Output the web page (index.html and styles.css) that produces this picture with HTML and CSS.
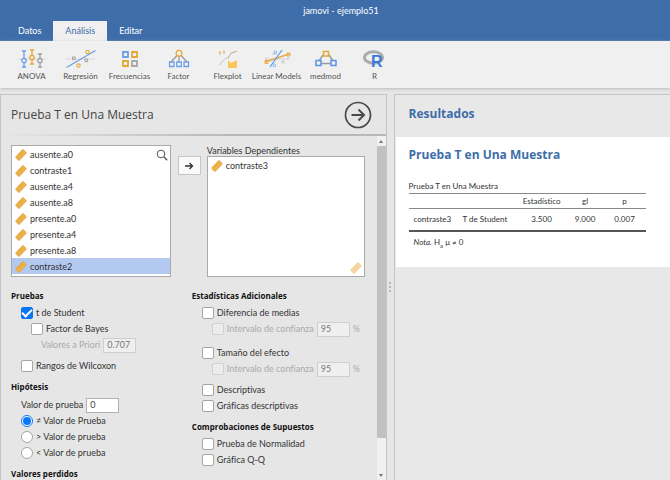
FILE: index.html
```
<!DOCTYPE html>
<html lang="es">
<head>
<meta charset="utf-8">
<title>jamovi - ejemplo51</title>
<link rel="stylesheet" href="styles.css">
</head>
<body>
<svg class="defs" aria-hidden="true">
  <symbol id="ruler" viewBox="0 0 12 12">
    <path d="M1 7.6 7.4.8q.6-.6 1.200 0L11 3.200q.6.6 0 1.200L4.500 11.200q-.6.6-1.200 0L1 8.800q-.6-.6 0-1.200z" fill="#eeb14c" stroke="#dc9a33" stroke-width=".6"/>
    <path d="M3.200 5.700l1.200 1.200M4.800 4.100l1.200 1.200M6.400 2.500l1.200 1.200" stroke="#d08f2c" stroke-width=".6"/>
  </symbol>
</svg>

<header class="titlebar">
  <div class="title">jamovi - ejemplo51</div>
  <nav class="tabs">
    <button class="tab" type="button">Datos</button>
    <button class="tab active" type="button">Análisis</button>
    <button class="tab" type="button">Editar</button>
  </nav>
</header>

<div class="ribbon">
  <button class="tool" type="button">
    <svg viewBox="0 0 30 20" fill="none"><path d="M1 10h28" stroke="#c8c8c8" stroke-dasharray="1 1"/><g stroke-width="1.300"><path d="M5 2h4M7 2v7M7 14v4M5 18h4" stroke="#6b9fe9"/><circle cx="7" cy="11.500" r="2.200" stroke="#6b9fe9"/><path d="M13 1h4M15 1v5M15 11v4M13 15h4" stroke="#e4a836"/><circle cx="15" cy="8.500" r="2.200" stroke="#e4a836"/><path d="M21 5h4M23 5v4M23 14v4M21 18h4" stroke="#a0a0a0"/><circle cx="23" cy="11.500" r="2.200" stroke="#a0a0a0"/></g></svg>
    <span>ANOVA</span>
  </button>
  <button class="tool" type="button">
    <svg viewBox="0 0 30 20" fill="none"><path d="M0 10h30" stroke="#c8c8c8" stroke-dasharray="1 1"/><path d="M.5 18.500 29.500 1.500" stroke="#6b9fe9" stroke-width="1.300"/><path d="M6.500 8h2.600v2.600H6.500zM19 10h2.600v2.600H19z" stroke="#a0a0a0"/><path d="M20 1.500h3v3h-3zM11 15h3v3h-3z" stroke="#e4a836"/></svg>
    <span>Regresión</span>
  </button>
  <button class="tool" type="button">
    <svg viewBox="0 0 30 20" fill="none" stroke-width="1.800"><path d="M8 3h5v5H8z" stroke="#6b9fe9"/><path d="M17 3h5v5h-5zM8 12h5v5H8z" stroke="#e4a836"/><path d="M17 12h5v5h-5z" stroke="#a8a8a8"/></svg>
    <span>Frecuencias</span>
  </button>
  <button class="tool" type="button">
    <svg viewBox="0 0 30 20" fill="none" stroke-width="1.300"><path d="M13 6.500 7 13M15 7v6M17 6.500 23 13" stroke="#9a9a9a"/><circle cx="15" cy="4.300" r="2.900" stroke="#e4a836"/><path d="M5.500 13h4.500v4.500H5.500zM12.800 13h4.500v4.500h-4.500zM20 13h4.500v4.500H20z" stroke="#6b9fe9"/></svg>
    <span>Factor</span>
  </button>
  <button class="tool" type="button">
    <svg viewBox="0 0 30 20" fill="none"><path d="M7 2v4M6 3.500h2M11 1v4M10 3.500h2M15 10q2-7 9-7.500" stroke="#e3b871"/><path d="M6 16 14 8M15 9l3-5 6-2" stroke="#b8b8b8" stroke-width=".8"/><path d="M15 11l3 3 2-1 4-2v8h-9z" fill="#fac75d"/></svg>
    <span>Flexplot</span>
  </button>
  <button class="tool" type="button">
    <svg viewBox="0 0 30 20" fill="none"><path d="M3 10h24M10 5h5M4 8v4M26 8v3" stroke="#c8c8c8" stroke-width=".8"/><path d="M3 13 27 5" stroke="#e9aa48" stroke-width="1.600"/><path d="M8 18 20 1" stroke="#5e9bea" stroke-width="1.300"/><path d="M3 11.500h3v3H3zM25 4h3v3h-3z" stroke="#e9aa48"/><path d="M12 2h2.500v2.500H12zM11 15h2.500v2.500H11z" stroke="#7fb0ee" stroke-width=".8"/><circle cx="21" cy="13" r="1.300" stroke="#c4c4c4" stroke-width=".8"/></svg>
    <span>Linear Models</span>
  </button>
  <button class="tool" type="button">
    <svg viewBox="0 0 30 20" fill="none" stroke-width="1.500"><path d="M12 6 8 12M18 6l4 6M10 14.500h10" stroke="#9a9a9a"/><path d="M12.500 2.500h5v4.500h-5z" stroke="#e4a836"/><path d="M5 11.500h5v5H5zM20 11.500h5v5h-5z" stroke="#5b93ea"/></svg>
    <span>medmod</span>
  </button>
  <button class="tool" type="button">
    <svg viewBox="0 0 30 20"><ellipse cx="13.500" cy="8.500" rx="9" ry="5.800" fill="none" stroke="#a9abb0" stroke-width="3"/><text x="11" y="18" class="r-mark">R</text></svg>
    <span>R</span>
  </button>
</div>

<main class="workspace">
  <section class="options">
    <div class="options-head">
      <h1>Prueba T en Una Muestra</h1>
      <button class="run" type="button" aria-label="Ocultar opciones">
        <svg viewBox="0 0 28 28" fill="none" stroke="#4a4a4a"><circle cx="14" cy="14" r="12.500" stroke-width="1.700"/><path d="M7.500 14h12M14.500 8.500 20 14l-5.500 5.500" stroke-width="2"/></svg>
      </button>
    </div>
    <div class="options-body">
      <div class="scroll">
        <div class="supplier">
          <ul class="vars">
            <li><svg><use href="#ruler"/></svg>ausente.a0</li>
            <li><svg><use href="#ruler"/></svg>contraste1</li>
            <li><svg><use href="#ruler"/></svg>ausente.a4</li>
            <li><svg><use href="#ruler"/></svg>ausente.a8</li>
            <li><svg><use href="#ruler"/></svg>presente.a0</li>
            <li><svg><use href="#ruler"/></svg>presente.a4</li>
            <li><svg><use href="#ruler"/></svg>presente.a8</li>
            <li class="selected"><svg><use href="#ruler"/></svg>contraste2</li>
            <svg class="search" viewBox="0 0 12 12" fill="none" stroke="#555"><circle cx="5" cy="5" r="3.800"/><path d="m8 8 3.200 3.200" stroke-width="1.300"/></svg>
          </ul>
          <button class="move" type="button" aria-label="Mover variable">
            <svg viewBox="0 0 10 10" fill="none" stroke="#333" stroke-width="1.400"><path d="M1 5h7.500M5.500 2l3 3-3 3"/></svg>
          </button>
          <div class="target">
            <div class="target-label">Variables Dependientes</div>
            <ul class="vars">
              <li><svg><use href="#ruler"/></svg>contraste3</li>
              <svg class="hint"><use href="#ruler"/></svg>
            </ul>
          </div>
        </div>

        <div class="columns">
          <div class="column">
            <h2>Pruebas</h2>
            <label class="row"><input type="checkbox" checked>t de Student</label>
            <label class="row sub"><input type="checkbox">Factor de Bayes</label>
            <label class="row sub2 off">Valores a Priori<input class="num" type="text" value="0.707" disabled></label>
            <label class="row spaced"><input type="checkbox">Rangos de Wilcoxon</label>
            <h2>Hipótesis</h2>
            <label class="row field">Valor de prueba<input class="num" type="text" value="0"></label>
            <label class="row"><input type="radio" name="hyp" checked>≠ Valor de Prueba</label>
            <label class="row"><input type="radio" name="hyp">&gt; Valor de prueba</label>
            <label class="row"><input type="radio" name="hyp">&lt; Valor de prueba</label>
            <h2>Valores perdidos</h2>
          </div>
          <div class="column">
            <h2>Estadísticas Adicionales</h2>
            <label class="row"><input type="checkbox">Diferencia de medias</label>
            <div class="row sub off"><input id="ci1" type="checkbox" disabled><label for="ci1">Intervalo de confianza</label><input class="num" type="text" value="95" aria-label="Porcentaje" disabled><span>%</span></div>
            <label class="row apart"><input type="checkbox">Tamaño del efecto</label>
            <div class="row sub off"><input id="ci2" type="checkbox" disabled><label for="ci2">Intervalo de confianza</label><input class="num" type="text" value="95" aria-label="Porcentaje" disabled><span>%</span></div>
            <label class="row spaced"><input type="checkbox">Descriptivas</label>
            <label class="row"><input type="checkbox">Gráficas descriptivas</label>
            <h2>Comprobaciones de Supuestos</h2>
            <label class="row"><input type="checkbox">Prueba de Normalidad</label>
            <label class="row"><input type="checkbox">Gráfica Q-Q</label>
          </div>
        </div>
      </div>
      <div class="scrollbar">
        <div class="arrow up"></div>
        <div class="thumb"></div>
        <div class="track"></div>
        <div class="arrow down"></div>
      </div>
    </div>
  </section>

  <div class="splitter"><i></i><i></i><i></i></div>

  <section class="results">
    <h2 class="results-title">Resultados</h2>
    <article class="result">
      <h2>Prueba T en Una Muestra</h2>
      <table>
        <caption>Prueba T en Una Muestra</caption>
        <colgroup><col class="wide"><col class="wide"><col class="mid"><col class="narrow"><col></colgroup>
        <thead><tr><th></th><th></th><th>Estadístico</th><th>gl</th><th>p</th></tr></thead>
        <tbody><tr><td>contraste3</td><td>T de Student</td><td>3.500</td><td>9.000</td><td>0.007</td></tr></tbody>
        <tfoot><tr><td colspan="5"><em>Nota.</em> H<sub>a</sub> μ ≠ 0</td></tr></tfoot>
      </table>
    </article>
  </section>
</main>
</body>
</html>
```

FILE: styles.css
```
* { box-sizing: border-box; }

body {
  margin: 0;
  height: 100vh;
  display: flex;
  flex-direction: column;
  overflow: hidden;
  background: #e6e6e6;
  color: #333;
  font: 9px/16px Lato, "Open Sans", sans-serif;
  font-variant-ligatures: none;
}

h1, h2, ul { margin: 0; padding: 0; }
button, input { font: inherit; color: inherit; margin: 0; padding: 0; }
button { border: 0; background: none; }
.defs { position: absolute; width: 0; height: 0; }

/* Title bar */
.titlebar { background: #3e6da9; color: #fff; }
.title { height: 21px; padding: 3px 0 0 12px; text-align: center; }
.tabs { display: flex; padding-left: 6px; }
.tab { height: 20px; padding: 0 12px; }
.tab.active { background: #f0f0f0; color: #3e6da9; }

/* Ribbon */
.ribbon {
  display: flex;
  height: 47px;
  flex: none;
  padding: 8px 0 0 7px;
  background: #f0f0f0;
  box-shadow: 0 1px 3px #bbb;
  color: #555;
}
.tool {
  width: 49px;
  flex: none;
  display: flex;
  flex-direction: column;
  align-items: center;
  font-size: 8px;
  line-height: 14px;
  white-space: nowrap;
}
.tool svg { width: 30px; height: 20px; }
.r-mark { font: bold 16px "Liberation Sans", sans-serif; fill: #3b78dc; }

/* Workspace */
.workspace { flex: 1; min-height: 0; display: flex; padding-top: 6px; }

.options {
  flex: 0 0 57.7%;
  display: flex;
  flex-direction: column;
  min-width: 0;
  border: 1px solid #c3c3c3;
  border-width: 1px 1px 0;
  background: #e6e6e6;
}
.options-head {
  display: flex;
  justify-content: space-between;
  align-items: center;
  height: 41px;
  flex: none;
  padding: 0 14px 0 10px;
  border-bottom: 2px solid;
  border-image: linear-gradient(90deg, #e6e6e6, #b8b8b8 60%) 1;
}
.options-head h1 { font: 12px/16px "Open Sans", sans-serif; color: #444; }
.run, .run svg { display: block; width: 28px; height: 28px; }
.options-body { flex: 1; min-height: 0; display: flex; }
.scroll { flex: 1; min-width: 0; overflow: hidden; padding: 9px 12px 0 10px; }

.supplier { display: flex; align-items: flex-start; }
.vars {
  position: relative;
  list-style: none;
  height: 132px;
  border: 1px solid #aaa;
  background: #fff;
}
.supplier > .vars { flex: 1; }
.vars li { display: flex; align-items: center; gap: 3px; height: 16px; padding: 1px 0 0 3px; }
.vars li svg { width: 12px; height: 12px; }
.vars .selected { background: #b3c9ef; }
.search { position: absolute; top: 3px; right: 2px; width: 12px; height: 12px; }
.hint { position: absolute; right: 2px; bottom: 2px; width: 12px; height: 12px; opacity: .5; }
.move {
  display: grid;
  place-items: center;
  width: 23px;
  height: 19px;
  margin: 11px 6px 0 7px;
  border: 1px solid #c6c6c6;
  background: #fafafa;
}
.move svg { width: 10px; height: 10px; }
.target { flex: 1; }
.target-label { height: 11px; line-height: 11px; }
.target .vars { height: 121px; }

.columns { display: grid; grid-template-columns: 1fr 1fr; padding-top: 11px; gap: 8px; }
.column h2 { margin: 5px 0 1px; font: bold 8px/16px "Open Sans", sans-serif; color: #111; white-space: nowrap; }
.column h2:first-child { margin-top: 0; }
.row { display: flex; align-items: center; gap: 3px; height: 16px; padding-left: 10px; white-space: nowrap; }
.sub { padding-left: 20px; }
.sub2 { padding-left: 30px; gap: 3px; }
.field { gap: 3px; margin-top: 2px; }
.spaced { margin-top: 5px; }
.apart { margin-top: 8px; }
.off { color: #aaa; }

input[type=checkbox], input[type=radio] {
  appearance: none;
  flex: none;
  display: grid;
  place-items: center;
  width: 12px;
  height: 12px;
  border: 1px solid #a6a6a6;
  border-radius: 2px;
  background: #fff;
}
input[type=radio] { border-radius: 50%; }
input[type=checkbox]:checked { background: #0a75f5; border-color: #0a75f5; }
input[type=checkbox]:checked::after {
  content: "";
  width: 8px;
  height: 4px;
  margin-bottom: 2px;
  border: solid #fff;
  border-width: 0 0 2px 2px;
  transform: rotate(-45deg);
}
input[type=radio]:checked { border-color: #0a75f5; }
input[type=radio]:checked::after { content: ""; width: 8px; height: 8px; border-radius: 50%; background: #0a75f5; }
input[type=checkbox]:disabled { background: #ececec; border-color: #d0d0d0; }
.num { width: 33px; height: 15px; padding: 0 3px; border: 1px solid #b2b2b2; background: #fff; color: #444; }
.num:disabled { background: #efefef; border-color: #cfcfcf; color: #777; }

.scrollbar { width: 9px; display: flex; flex-direction: column; background: #f0f0f0; }
.thumb { flex: 296; background: #c1c1c1; }
.track { flex: 33; }
.arrow { height: 10px; display: grid; place-items: center; }
.arrow::after { content: ""; border: 2px solid transparent; }
.up::after { border-bottom: 3px solid #777; border-top: 0; }
.down::after { border-top: 3px solid #777; border-bottom: 0; }

.splitter { width: 7px; display: flex; flex-direction: column; align-items: center; justify-content: center; gap: 2px; }
.splitter i { width: 2px; height: 2px; background: #b5b5b5; }

/* Results */
.results { flex: 1; min-width: 0; border: 1px solid #c3c3c3; border-width: 1px 0 0 1px; padding-left: 1px; background: #e8e8e8; }
.results h2 { font: bold 12px/18px "Open Sans", sans-serif; color: #3e6da9; }
.results-title { padding: 10px 13px 14px; }
.result { padding: 9px 13px 18px; background: #fff; }
table { width: 237px; margin-top: 16px; table-layout: fixed; border-collapse: collapse; font-size: 8px; line-height: 14px; }
.wide { width: 54px; }
.mid { width: 50px; }
.narrow { width: 37px; }
caption { text-align: left; line-height: 13px; }
th, td { padding: 0; font-weight: 400; text-align: center; white-space: nowrap; }
thead { border-top: 1px solid #888; border-bottom: 1px solid #888; }
tbody { border-bottom: 2px solid #555; }
tbody td { height: 22px; }
tbody td:nth-child(2) { text-align: left; }
tbody td:first-child, tfoot td { text-align: left; padding-left: 5px; }
tfoot td { padding-top: 3px; }
sub { font-size: 6px; line-height: 0; }
```
